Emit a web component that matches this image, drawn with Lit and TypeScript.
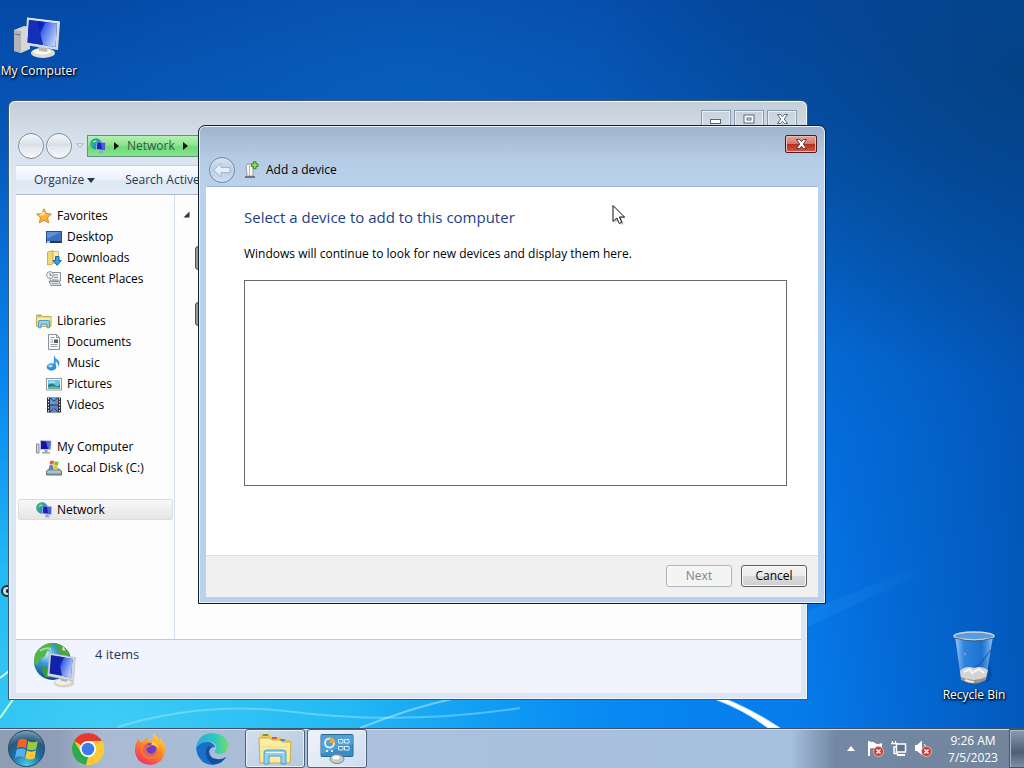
import { LitElement, html, css, svg } from "lit";
import { customElement } from "lit/decorators.js";

const monitor = (id: string) => svg`
  <defs>
    <linearGradient id=${id} x1="0" y1="0" x2="1" y2="0.6">
      <stop offset="0" stop-color="#0a1f9c"/><stop offset=".3" stop-color="#1026c4"/>
      <stop offset=".36" stop-color="#3f66e8"/><stop offset="1" stop-color="#b9cdfb"/>
    </linearGradient>
  </defs>`;

const computerLarge = html`<svg width="48" height="42" viewBox="0 0 48 42">
  ${monitor("scr1")}
  <path d="M-1 13 L9 9 L15 10 L15 32 L6 36 L-1 34Z" fill="#d9d6d2"/>
  <path d="M-1 13 L6 14 L6 36 L-1 34Z" fill="#b3b3b8"/>
  <path d="M0 17 L5 18" stroke="#6d7078"/>
  <ellipse cx="28" cy="36" rx="12" ry="5" fill="#dedbd2"/>
  <ellipse cx="27" cy="34.500" rx="9" ry="3" fill="#faf9f4"/>
  <path d="M23 28 L33 30 L32 35 L24 34Z" fill="#b9b7b0"/>
  <path d="M12 1 L45 5 L43 33 L10 28Z" fill="#d3dae2"/>
  <path d="M12 1 L45 5" stroke="#f3f6fa"/>
  <path d="M14 3 L42 6.500 L40.500 30 L12.500 25.500Z" fill="#0b1ba8"/>
  <path d="M22 4 L42 6.500 L40.500 30 L28 27.900Z" fill="url(#scr1)"/>
  <path d="M14 3 L22 4 L28 27.900 L12.500 25.500Z" fill="#1530b8"/>
</svg>`;

const globePc = html`<svg width="16" height="16" viewBox="0 0 16 16">
  <circle cx="6" cy="6" r="5.800" fill="#2695cf"/>
  <path d="M1 5 Q3 0 8 .5 L7 4 L4 6 L3 10 L1 8Z" fill="#37b36b"/>
  <path d="M3 4 L6 3" stroke="#c7f0f5"/>
  <path d="M6.500 3.500 L16 4.500 L15.500 13 L6 11.800Z" fill="#9fb0dc"/>
  <path d="M7.300 4.300 L15 5.200 L14.700 12 L7 11Z" fill="#1c22b8"/>
  <path d="M11 4.800 L15 5.200 L14.700 12 L12 11.600Z" fill="#4a63dd"/>
  <path d="M9.500 12.500 L13 13 L13.500 15.600 L9 15.200Z" fill="#8fa6d6"/>
</svg>`;

const star = html`<svg width="16" height="16" viewBox="0 0 16 16"><path d="M8 .8 L10.2 5.5 L15.4 6.1 L11.5 9.7 L12.6 14.8 L8 12.2 L3.4 14.8 L4.5 9.7 L.6 6.1 L5.8 5.5Z" fill="#f9b43a" stroke="#d98420"/><path d="M8 3 L9.3 6.5 L6 7.8 L3 7Z" fill="#fde29a"/></svg>`;
const desk = html`<svg width="16" height="16" viewBox="0 0 16 16"><rect x=".5" y="2.5" width="15" height="11" fill="#3c6fc4" stroke="#2a4c94"/><path d="M1 3 H15 L1 10Z" fill="#5b90dc"/><rect x="1" y="12" width="14" height="2" fill="#25395f"/><rect x="1" y="12" width="3" height="2" fill="#8fd0ea"/></svg>`;
const download = html`<svg width="16" height="16" viewBox="0 0 16 16"><path d="M1.5 2 L7 .6 V14 L1.5 15Z" fill="#efd77c" stroke="#cfae52"/><path d="M7 1.500 H12.500 V13 H7Z" fill="#fbeeb4" stroke="#d5bb6a"/><path d="M9.500 6.500 H13 V10.500 H15.400 L11.200 15.400 L7 10.500 H9.500Z" fill="#38a0dd" stroke="#1668a8"/></svg>`;
const recent = html`<svg width="16" height="16" viewBox="0 0 16 16"><path d="M5 1.5 H14.5 V10 H4Z" fill="#eef0f2" stroke="#8d9298"/><path d="M8 4 H12 M8 6.5 H12 M6 9 H12" stroke="#8d9298"/><path d="M3 10.5 H13 L15 14.5 H5Z" fill="#dfe2e5" stroke="#8d9298"/><path d="M6 12.5 H12" stroke="#9fa5aa"/><circle cx="4" cy="4" r="3.4" fill="#f7f8f9" stroke="#8d9298"/><path d="M4 2 V4.3 H6" stroke="#777" fill="none"/></svg>`;
const library = html`<svg width="16" height="16" viewBox="0 0 16 16"><path d="M.5 2 H5 L6.5 3.5 H15 V13.5 H.5Z" fill="#f0dc85" stroke="#c9aa4c"/><path d="M2 3 H5" stroke="#4fb06a"/><path d="M1 6 H15" stroke="#fff6c8"/><path d="M2.5 14.8 V9 Q2.5 7.5 4 7.5 H12 Q13.5 7.5 13.5 9 V14.8 H11 V11 H5 V14.8Z" fill="#8fd3ef" stroke="#4a9cc8"/></svg>`;
const docIcon = html`<svg width="16" height="16" viewBox="0 0 16 16"><path d="M2.5 .5 H10.5 L13.5 3.5 V15.5 H2.5Z" fill="#fafbfc" stroke="#8a9096"/><path d="M10.5 .5 V3.5 H13.5" fill="none" stroke="#8a9096"/><path d="M4.5 3.5 H8.5 M4.5 6 H7 M4.5 8 H7 M4.5 10.500 H11.500 M4.500 12.500 H11.500" stroke="#9aa3ab"/><rect x="8" y="5.500" width="4" height="3.500" fill="#56616c"/></svg>`;
const music = html`<svg width="16" height="16" viewBox="0 0 16 16"><path d="M8 0 Q9 3.500 12 5 Q15 7.500 12 12 Q12.500 8.500 9.800 6.500 V12 H7.500Z" fill="#3a9be0"/><ellipse cx="5.500" cy="12" rx="4.800" ry="3.700" fill="#2f8fdc"/><ellipse cx="4.500" cy="11" rx="2.300" ry="1.400" fill="#a4dafa"/></svg>`;
const picture = html`<svg width="16" height="16" viewBox="0 0 16 16"><rect x=".5" y="2.500" width="15" height="11.500" fill="#fff" stroke="#8b99a5"/><rect x="2" y="4" width="12" height="8.500" fill="#6cc4ea"/><path d="M2 9 Q6 6 9 9 T14 8 V12.500 H2Z" fill="#1c7c96"/><path d="M2 11 Q7 9.500 14 11.500 V12.500 H2Z" fill="#6ab884"/><path d="M3 6 H9" stroke="#e2f6fd"/></svg>`;
const video = html`<svg width="16" height="16" viewBox="0 0 16 16"><rect x="1" y=".5" width="14" height="15" fill="#2b3036"/><rect x="4" y="1" width="8" height="6.500" fill="#5c9fdc"/><rect x="4" y="8.500" width="8" height="6.500" fill="#4b8cd0"/><path d="M4 1 L8 4 L12 1 M4 15 L8 11 L12 15" stroke="#1b3f80" fill="none"/><circle cx="10" cy="5" r="1.300" fill="#d65a5a"/><circle cx="7" cy="11" r="1.300" fill="#d65a5a"/><path d="M2.500 1 V15 M13.500 1 V15" stroke="#e8ecf0" stroke-dasharray="1.500 1.500"/></svg>`;
const pcSmall = html`<svg width="16" height="16" viewBox="0 0 16 16"><path d="M.5 5 H3 V14 H.5Z" fill="#d3d6da" stroke="#868b93"/><path d="M4 1 L15.500 1.500 L15 11 H4Z" fill="#b8c0d6"/><path d="M5 2 L14.500 2.500 L14 10 H5Z" fill="#1515a4"/><path d="M10 2.300 L14.500 2.500 L14 10 H12Z" fill="#5868dc"/><path d="M8.500 11 H11.500 V13 H14 V14.500 H6 V13 H8.500Z" fill="#9aa2ae"/></svg>`;
const disk = html`<svg width="16" height="16" viewBox="0 0 16 16"><path d="M3 9 L13 9 L15.500 11 V15 H.5 V11Z" fill="#8fa2ae" stroke="#5f717d"/><path d="M1 12 H15" stroke="#d3dde3"/><rect x="11" y="13" width="3" height="1" fill="#58d04c"/><path d="M4 1 Q6 -.2 8 1 L7.500 4.800 Q5.500 3.800 3.500 4.800Z" fill="#e3653a"/><path d="M8.600 1.200 Q10.500 2.200 12.500 1.200 L12 5 Q10 6 8.100 5Z" fill="#7db83c"/><path d="M3.300 5.400 Q5.500 4.400 7.400 5.400 L7 9.300 Q5 8.500 2.800 9.500Z" fill="#3f8bd8"/><path d="M8 5.600 Q10 6.600 11.900 5.600 L11.400 9.500 Q9.500 10.500 7.500 9.500Z" fill="#f2bd2e"/></svg>`;

const globeLarge = html`<svg width="44" height="46" viewBox="0 0 44 46">
  <defs><radialGradient id="gl" cx=".35" cy=".3" r=".75"><stop offset="0" stop-color="#bfe9fb"/><stop offset=".35" stop-color="#3a9bd8"/><stop offset="1" stop-color="#0b3a86"/></radialGradient></defs>
  ${monitor("scr2")}
  <circle cx="19.500" cy="19.500" r="18.500" fill="url(#gl)"/>
  <path d="M2 12 Q8 2 18 1 L20 6 L14 9 L12 14 L7 17 L4 24 L1 20Z" fill="#55b544"/>
  <path d="M22 1 Q32 3 37 12 L33 17 L28 12 L24 9Z" fill="#4da344"/>
  <path d="M30 4 L33 9 L29 8Z" fill="#e9dfa8"/>
  <path d="M9 24 L16 26 L17 34 L13 36 Q8 31 9 24Z" fill="#349a3c"/>
  <path d="M7 9 Q13 5 18 7" stroke="#dff6e8" stroke-width="2" fill="none" opacity=".6"/>
  <ellipse cx="31" cy="41" rx="10.500" ry="4.500" fill="#d6d3ca"/><ellipse cx="30" cy="40" rx="8" ry="3" fill="#f0eee8"/><path d="M27 34 L35 35 L34 40 L28 39Z" fill="#b7b5ae"/>
  <path d="M16.500 11 L42.500 15.500 L40.500 39 L14.500 34Z" fill="#d0d6e2" stroke="#a9b0bd" stroke-width=".5"/>
  <path d="M18 13 L39.500 17 L38 35.500 L16.500 31.500Z" fill="#1022a8"/>
  <path d="M25 14.300 L39.500 17 L38 35.500 L29 33.800Z" fill="url(#scr2)"/>
</svg>`;

const bin = html`<svg width="44" height="54" viewBox="0 0 44 54">
  <defs><linearGradient id="bn" x1="0" x2="1"><stop offset="0" stop-color="#b4dafa" stop-opacity=".9"/><stop offset=".25" stop-color="#4a9bea" stop-opacity=".6"/><stop offset=".7" stop-color="#3388e0" stop-opacity=".5"/><stop offset="1" stop-color="#a8d2f8" stop-opacity=".9"/></linearGradient></defs>
  <path d="M37 30 L40 44 Q39 51 34 51Z" fill="#06306e" opacity=".35"/>
  <path d="M3 5 L9 48 Q22 56 34 48 L41 5Z" fill="url(#bn)"/>
  <path d="M8 40 Q13 34 22 37 Q30 34 36 39 L34 47 Q22 53 9 47Z" fill="#d3d4d4"/>
  <path d="M12 41 L18 38 L20 42 L27 38 L32 42" stroke="#f4f4f1" stroke-width="2" fill="none"/>
  <path d="M9 46 Q22 52 34 46 V49 Q22 56 9 49Z" fill="#9c938b"/><path d="M13 49 Q18 51 22 51" stroke="#ece8e2" stroke-width="2" fill="none"/>
  <path d="M39 19 Q32 28 27 34 L23 36" stroke="#174f9c" fill="none"/><path d="M12 22 L14 24" stroke="#8f8fe0" stroke-width="2"/>
  <ellipse cx="22" cy="5" rx="20" ry="4" fill="#5b9cdc" stroke="#cdd6de" stroke-width="1.500"/>
  <path d="M3 7 Q22 13 41 7" stroke="#3d5c82" fill="none"/>
</svg>`;

const flag = (s: number) => html`<svg class="flag" width=${s} height=${s} viewBox="0 0 24 24"><path d="M4 4 Q8 1 12 4 L11 11.500 Q7 9 2.500 11.500Z" fill="#f0642a"/><path d="M13 4.500 Q17.500 7 22 4.500 L20.500 12 Q16 14.500 12 12Z" fill="#9acb3e"/><path d="M2.300 12.700 Q6.800 10.200 10.800 12.700 L9.500 20 Q5.500 17.500 1 20Z" fill="#52b4ee"/><path d="M11.800 13.200 Q16 15.700 20.300 13.200 L19 20.500 Q15 23 10.500 20.500Z" fill="#fbc93a"/></svg>`;

const chrome = html`<svg width="32" height="32" viewBox="0 0 32 32"><circle cx="16" cy="16" r="16" fill="#fcc934"/><path d="M16 16 L2.140 8 A16 16 0 0 1 29.860 8Z" fill="#e33b2e"/><path d="M2.140 8 L9.100 20 L16 24 L14 31.900 A16 16 0 0 1 2.140 8Z" fill="#2da94f"/><path d="M16 8 H29.860 A16 16 0 0 1 14 31.900 L22.900 20Z" fill="#fcc934"/><circle cx="16" cy="16" r="8" fill="#fff"/><circle cx="16" cy="16" r="6.300" fill="#3a7ce8"/></svg>`;
const firefox = html`<svg width="32" height="32" viewBox="0 0 32 32">
  <defs><linearGradient id="ff" x1=".8" y1="0" x2=".2" y2="1"><stop offset="0" stop-color="#ffe03a"/><stop offset=".45" stop-color="#ff8a25"/><stop offset="1" stop-color="#f0286a"/></linearGradient></defs>
  <path d="M19 0 Q25 4 25 9 Q27 8 26.500 5 Q32 11 31 19 Q29 31 16 32 Q3 31 1 19 Q.5 10 5 6 L6 9 Q8 8 10 9 Q11 5 13 4 Q13 7 16 9 Q20 6 19 0Z" fill="url(#ff)"/>
  <circle cx="16" cy="17" r="7" fill="#7a3be0"/><path d="M7 13 Q11 10 15 12 L18 13 Q15 16 12 16 Q13 20 17 20 Q22 19 23 15 Q26 23 20 26 Q10 28 7 19Z" fill="#ff7a2a" opacity=".7"/><path d="M13 15 Q17 12 21 15 Q22 20 17 21 Q13 20 13 15Z" fill="#6d3cc8"/><path d="M19 8 Q24 10 24 16 Q22 12 17 12Z" fill="#ffcf35"/></svg>`;
const edge = html`<svg width="32" height="32" viewBox="0 0 32 32">
  <defs><linearGradient id="e1" x1="0" x2="1"><stop offset="0" stop-color="#2aa9e4"/><stop offset=".6" stop-color="#2fc9c0"/><stop offset="1" stop-color="#6fdd62"/></linearGradient></defs>
  <path d="M0 15 Q2 1 16 0 Q31 1 32 13 Q32 20 24 21 Q18 21 19 18 Q22 14 18 10 Q10 6 0 15Z" fill="url(#e1)"/>
  <path d="M0 15 Q5 8 13 9 Q18 10 19 14 Q14 14 13 19 Q13 26 21 27 Q26 27 30 24 Q25 32 16 32 Q2 31 0 15Z" fill="#1a70c8"/>
  <path d="M10 17 Q9 27 17 31.500 Q25 31 30 24 Q26 27 21 26 Q13 25 13 18 Q13 15 16 13 Q11 13 10 17Z" fill="#124f9c"/></svg>`;
const explorer = html`<svg width="34" height="32" viewBox="0 0 34 32">
  <path d="M2 3 Q2 1 4 1 H12 L14 4 H22 L24 6 H31 Q33 6 33 8 V29 H2Z" fill="#e9c95c"/>
  <rect x="5" y="1" width="5" height="2" fill="#4aa45c"/><rect x="14" y="4" width="5" height="2" fill="#d0603c"/><rect x="22" y="6" width="5" height="2" fill="#4a90cc"/>
  <path d="M1 5 H12 L14 7 H22 L24 9 H33 L32 30 H2Z" fill="#faeda0" stroke="#c9a94a"/>
  <path d="M3 14 H31 M3 18 H31" stroke="#f2dc7c"/>
  <path d="M6 31 V20 Q6 17 9 17 H25 Q28 17 28 20 V31 H23 V23 H11 V31Z" fill="#8fd0f0" stroke="#4c9cc8"/><path d="M8 19.500 H26" stroke="#e8f8ff"/></svg>`;
const devices = html`<svg width="34" height="30" viewBox="0 0 34 30"><rect x="1" y=".5" width="32" height="22" rx="1" fill="#3a8ec6" stroke="#256a9c"/><path d="M1 1 H33 V10 L1 20Z" fill="#5fabdc" opacity=".6"/><circle cx="9.500" cy="9" r="4.500" fill="none" stroke="#d9ecf8" stroke-width="2"/><path d="M9.500 9 V3.500 A5.500 5.500 0 0 1 15 9Z" fill="#f0a63c"/><g fill="none" stroke="#d9ecf8"><path d="M18.500 5.500 H23 V9 H18.500Z M24.500 5.500 H29 V9 H24.500Z M18.500 12.500 H23 V16 H18.500Z M24.500 12.500 H29 V16 H24.500Z"/></g><path d="M6 17 H8 M11 17 H13" stroke="#d9ecf8" stroke-width="2"/><ellipse cx="17" cy="25" rx="7" ry="4.500" fill="#c3c9ce" stroke="#7d8890"/><ellipse cx="16" cy="23.500" rx="3.500" ry="2" fill="#fff"/></svg>`;

const redBadge = svg`<circle cx="11.500" cy="11.500" r="5" fill="#cf3a34" stroke="#efb5b0"/><path d="M9.500 9.500 L13.500 13.500 M13.500 9.500 L9.500 13.500" stroke="#fff" stroke-width="1.500"/>`;
const trayFlag = html`<svg width="18" height="18" viewBox="0 0 18 18"><path d="M2 1 V16" stroke="#fff" stroke-width="2"/><path d="M3 2 Q6 1 8 3 T15 3 V10 Q11 11 8 9 T3 9Z" fill="#fff"/>${redBadge}</svg>`;
const trayNet = html`<svg width="18" height="18" viewBox="0 0 18 18"><path d="M1.500 1 V4 M4.500 1 V4" stroke="#fff"/><path d="M0 3.500 H6 V7 H3 V13.500 H7" fill="none" stroke="#fff" stroke-width="1.500"/><rect x="5.500" y="4" width="9" height="8" fill="#5f748c" stroke="#fff" stroke-width="1.500"/><path d="M6 15 H14" stroke="#fff" stroke-width="2"/></svg>`;
const traySound = html`<svg width="18" height="18" viewBox="0 0 18 18"><path d="M0 5 H2 L7 .5 V15 L2 11 H0Z" fill="#fff"/><path d="M9 4 Q11 6 11 8" stroke="#fff" fill="none"/>${redBadge}</svg>`;

const addIcon = html`<svg width="16" height="18" viewBox="0 0 16 18"><path d="M2 4.500 L4 3 H9 V15 H3Z" fill="#f4f4f0" stroke="#9b9b98"/><path d="M5.500 4 V15" stroke="#c2bd93"/><path d="M1 16 H11" stroke="#74747a" stroke-width="2"/><path d="M9.500 .7 H12 V3 H14 V5.500 H12 V7.800 H9.500 V5.500 H7.500 V3 H9.500Z" fill="#8fe06a" stroke="#2c8a24"/></svg>`;
const arrowGlyph = html`<svg width="18" height="16" viewBox="0 0 18 16"><path d="M1 8 L8 1 V5.500 H17 V10.500 H8 V15Z" fill="#e3eefa" stroke="#a4b9d0"/></svg>`;

type Item = { label: string; icon: unknown; child?: boolean; selected?: boolean };
const groups: Item[][] = [
  [
    { label: "Favorites", icon: star },
    { label: "Desktop", icon: desk, child: true },
    { label: "Downloads", icon: download, child: true },
    { label: "Recent Places", icon: recent, child: true },
  ],
  [
    { label: "Libraries", icon: library },
    { label: "Documents", icon: docIcon, child: true },
    { label: "Music", icon: music, child: true },
    { label: "Pictures", icon: picture, child: true },
    { label: "Videos", icon: video, child: true },
  ],
  [
    { label: "My Computer", icon: pcSmall },
    { label: "Local Disk (C:)", icon: disk, child: true },
  ],
  [{ label: "Network", icon: globePc, selected: true }],
];

@customElement("app-root")
export class AppRoot extends LitElement {
  static styles = css`
    :host {
      display: flex;
      flex-direction: column;
      height: 100vh;
      overflow: hidden;
      font: 12px/16px "Open Sans", "Noto Sans", sans-serif;
      color: #000;
    }
    * { box-sizing: border-box; }
    button { font: inherit; color: inherit; padding: 0; border: 0; background: none; }
    a { color: inherit; text-decoration: none; }
    svg { display: block; flex: none; overflow: visible; }
    .desktop { position: relative; flex: 1; min-height: 0; background: #0860c8; overflow: hidden; }
    .wallpaper { position: absolute; inset: 0; width: 100%; height: 100%; overflow: hidden; }
    .shortcut {
      position: absolute; width: 78px; display: flex; flex-direction: column; align-items: center;
      gap: 4px; color: #fff; text-shadow: 1px 1px 2px #000, 0 1px 3px #000; white-space: nowrap;
    }
    .computer { left: 0; top: 17px; }
    .recycle { right: 11px; bottom: 25px; gap: 2px; }
    .hidden-shortcut { position: absolute; left: 1px; top: 585px; }

    .explorer {
      position: absolute; inset: 100px 216px 28px 8px; display: flex; flex-direction: column;
      border: 1px solid #3d5873; border-radius: 7px 7px 0 0; padding: 0 6px 6px 7px;
      background: linear-gradient(#c3ced9, #d8e2ec 40px, #dfe8f2 90px, #dbe6f2);
      box-shadow: inset 0 0 0 1px #f0f6fb;
    }
    .caption { display: flex; justify-content: flex-end; gap: 3px; height: 28px; padding: 9px 4px 0 0; }
    .caption button {
      width: 30px; height: 16px; border: 1px solid #8b9bad; border-bottom: 0;
      display: grid; place-items: center; box-shadow: inset 0 0 0 1px #e8eff6;
    }
    .address { display: flex; align-items: center; height: 36px; padding: 0 0 2px 2px; gap: 2px; }
    .round {
      width: 26px; height: 26px; border: 1px solid #7f8b98; border-radius: 50%; flex: none;
      display: grid; place-items: center;
      background: linear-gradient(#f4f7fa, #d5dde5 50%, #dfe6ed 52%, #f6f9fc);
      box-shadow: inset 0 0 0 1px #f6f9fc;
    }
    .history { margin-left: 2px; }
    .crumbs {
      display: flex; align-items: center; flex: 1; height: 22px; margin-left: 1px; padding-left: 2px; gap: 8px;
      border: 1px solid #6c8c88; background: linear-gradient(#b4f0b4, #8ee58e 45%, #6fdb78 55%, #84e58a);
      color: #2d5c46;
    }
    .toolbar {
      display: flex; align-items: center; height: 30px; padding-left: 18px; gap: 30px; color: #1e395b;
      background: linear-gradient(#fafcfe, #eaf1fa 50%, #dde8f5 52%, #e3ecf7);
      border-top: 1px solid #c3cfdc; border-bottom: 1px solid #a9b9ca;
    }
    .organize { display: flex; align-items: center; gap: 3px; }
    .content { display: flex; flex: 1; min-height: 0; background: #fdfdfd; }
    .nav {
      display: flex; flex-direction: column; gap: 21px; width: 159px; padding: 10px 1px 0 2px;
      border-right: 1px solid #d3e0ec;
    }
    .nav ul { margin: 0; padding: 0; list-style: none; }
    .nav a { display: flex; align-items: center; gap: 5px; height: 21px; padding-left: 17px; border: 1px solid transparent; white-space: nowrap; }
    .nav a.child { padding-left: 27px; }
    .nav a.selected { border-color: #dcdcdc; border-radius: 2px; background: linear-gradient(#f8f8f8, #e6e6e6); }
    .items { display: flex; flex-direction: column; gap: 32px; flex: 1; padding: 16px 0 0 8px; }
    .items .device { margin-left: 12px; width: 40px; height: 24px; border: 1px solid #555; border-radius: 3px; background: #999; }
    .items svg { margin-bottom: -4px; }
    .details {
      display: flex; gap: 18px; height: 54px; padding: 2px 0 0 17px; color: #1e395b; font-size: 13px;
      background: #f1f4fe; border-top: 1px solid #c2cbd5;
    }
    .details span { padding-top: 4px; }

    .dialog {
      position: absolute; inset: 125px 198px 124px 198px; display: flex; flex-direction: column;
      border: 1px solid #10202e; border-radius: 7px 7px 0 0; padding: 0 7px 6px;
      background: linear-gradient(#9eb3ca, #b5cce4 32px, #bad1ec 60px, #b9d1ea);
      box-shadow: inset 0 0 0 1px #e6f1fa;
    }
    .dialog-caption { display: flex; justify-content: flex-end; height: 30px; padding: 9px 1px 0 0; }
    .close {
      width: 32px; height: 18px; border: 1px solid #4d1c22; border-radius: 2px; display: grid; place-items: center;
      background: linear-gradient(#e5a498, #d3776c 48%, #b8301f 52%, #cf5a45);
      box-shadow: inset 0 0 0 1px #eebbb2;
    }
    .dialog-head { display: flex; align-items: center; height: 30px; padding-left: 3px; padding-bottom: 2px; gap: 6px; }
    .dialog-head svg { margin-left: 3px; }
    .dialog-head .round { background: linear-gradient(#d7e3f0, #bacde2 50%, #cfdff0); border-color: #6f86a0; box-shadow: inset 0 0 0 1px #d9e6f3; }
    .dialog-head .round svg { margin: 0; }
    .body { display: flex; flex-direction: column; flex: 1; min-height: 0; padding: 18px 31px 69px 38px; background: #fff; border-top: 1px solid #9db4cf; }
    h1 { margin: 0; font-size: 15px; line-height: 24px; font-weight: 400; color: #1c3f8c; }
    p { margin: 16px 0 17px; line-height: 18px; }
    .found { flex: 1; border: 1px solid #646a70; }
    .footer { display: flex; justify-content: flex-end; gap: 9px; height: 42px; padding: 9px 11px 0 0; background: #f0f0f0; border-top: 1px solid #dfdfdf; }
    .footer button {
      width: 66px; height: 22px; border: 1px solid #5f5f5f; border-radius: 3px;
      background: linear-gradient(#f3f3f3, #ebebeb 50%, #dadada 52%, #cfcfcf); box-shadow: inset 0 0 0 1px #fafafa;
    }
    .footer button:disabled { border-color: #adb2b5; background: #f4f4f4; color: #838383; }
    .pointer { position: absolute; left: 612px; top: 204px; }

    .taskbar {
      display: flex; align-items: center; height: 40px; flex: none; padding-left: 8px;
      border-top: 1px solid #40536b; box-shadow: inset 0 1px 0 #d0dcea;
      background: linear-gradient(90deg, #8e9db2, #8f9fb8 60px, #a9bad2 100px, #abc1dd 400px, #a6c0de 790px, #7388a3 835px, #72859d);
    }
    .orb {
      width: 37px; height: 37px; border-radius: 50%; display: grid; place-items: center; flex: none;
      border: 1px solid #23486c; margin-right: 27px;
      background: radial-gradient(circle at 50% 100%, #4bd3ee, #1c6f9e 40%, #27597f 65%, #9db8cc);
    }
    .pins { display: flex; gap: 30px; margin-right: 17px; }
    .tasks { display: flex; gap: 2px; height: 39px; }
    .tasks button {
      width: 60px; border: 1px solid #4c6078; border-radius: 3px; display: grid; place-items: center;
      background: linear-gradient(135deg, #d3dfee, #b5c8e0); box-shadow: inset 0 0 0 1px #e8f0fa;
    }
    .tasks button.active { background: linear-gradient(135deg, #f0f4fa, #cfdcee); }
    .tray { display: flex; align-items: center; margin-left: auto; height: 100%; color: #fff; }
    .tray-icons { display: flex; align-items: center; gap: 6px; }
    .chevron { margin-right: 6px; }
    .clock { width: 72px; margin-left: 4px; text-align: center; line-height: 17px; }
    .show-desktop {
      width: 15px; height: 39px; border: 1px solid #45566c; border-right: 0;
      background: linear-gradient(#8a9cb2, #4c6077 60%, #7d90a8); box-shadow: inset 1px 1px 0 #a9b8ca;
    }
  `;

  private wallpaper() {
    return html`<svg class="wallpaper" viewBox="0 0 1024 728" preserveAspectRatio="none" aria-hidden="true">
      <defs>
        <linearGradient id="base" x1="0" y1="0" x2="0" y2="1">
          <stop offset="0" stop-color="#0549a6"/><stop offset=".3" stop-color="#0560c4"/><stop offset=".6" stop-color="#0470e0"/><stop offset="1" stop-color="#0478ea"/>
        </linearGradient>
        <radialGradient id="glow" cx="0.1" cy="1" r=".8">
          <stop offset="0" stop-color="#3fcdf4"/><stop offset=".3" stop-color="#24bdf5" stop-opacity=".95"/><stop offset=".6" stop-color="#0a94f8" stop-opacity=".7"/><stop offset="1" stop-color="#0a80f0" stop-opacity="0"/>
        </radialGradient>
        <linearGradient id="shade" x1="0" x2="1" y1="0" y2="0">
          <stop offset=".78" stop-color="#0450b0" stop-opacity="0"/><stop offset="1" stop-color="#034ba6" stop-opacity=".7"/>
        </linearGradient>
        <radialGradient id="corner" cx="1" cy=".1" r=".42"><stop offset="0" stop-color="#04407f" stop-opacity=".85"/><stop offset="1" stop-color="#04407f" stop-opacity="0"/></radialGradient>
        <radialGradient id="topglow" cx=".4" cy=".14" r=".35"><stop offset="0" stop-color="#0a62c0" stop-opacity=".7"/><stop offset="1" stop-color="#0a62c0" stop-opacity="0"/></radialGradient>
        <linearGradient id="ray" x1="0" x2="1"><stop offset="0" stop-color="#48b0ff" stop-opacity=".16"/><stop offset="1" stop-color="#48b0ff" stop-opacity="0"/></linearGradient>
      </defs>
      <rect width="1024" height="728" fill="url(#base)"/>
      <rect width="1024" height="728" fill="url(#topglow)"/>
      <rect width="1024" height="728" fill="url(#glow)"/>
      <rect width="1024" height="728" fill="url(#shade)"/>
      <rect width="1024" height="728" fill="url(#corner)"/>
      <path d="M800 614 L930 562 L940 566 L800 630Z" fill="url(#ray)"/>
      <path d="M118 727 Q200 702 285 711 Q400 726 520 708" stroke="#b6efff" stroke-opacity=".4" stroke-width="2" fill="none"/>
      <path d="M360 728 Q410 708 452 699" stroke="#c6f2ff" stroke-opacity=".5" stroke-width="2" fill="none"/>
      <path d="M0 718 L14 698" stroke="#c8ffb0" stroke-width="2"/><path d="M0 678 L9 671" stroke="#d6f8ff" stroke-width="2"/>
      <path d="M718 696 Q750 708 780 728 L768 728 Q745 710 712 698Z" fill="#fff" stroke="#bfe6ff"/>
    </svg>`;
  }

  render() {
    return html`
      <main class="desktop">
        ${this.wallpaper()}
        <a class="shortcut computer" href="#">${computerLarge}<span>My Computer</span></a>
        <a class="shortcut recycle" href="#">${bin}<span>Recycle Bin</span></a>
        <svg class="hidden-shortcut" width="14" height="14" viewBox="0 0 14 14" aria-hidden="true"><circle cx="6" cy="6" r="5" fill="#cfd6da" stroke="#1c2c33" stroke-width="2"/><circle cx="7" cy="6" r="2" fill="#111"/></svg>

        <section class="explorer" aria-label="Network">
          <div class="caption">
            <button aria-label="Minimize"><svg width="12" height="12" viewBox="0 0 12 12"><rect x=".5" y="6.500" width="10" height="4" fill="#fff" stroke="#58677a"/></svg></button>
            <button aria-label="Maximize"><svg width="12" height="12" viewBox="0 0 12 12"><rect x="1" y="2" width="10" height="8" fill="#fff" stroke="#58677a"/><rect x="4" y="5" width="4" height="2" fill="#fff" stroke="#58677a"/></svg></button>
            <button aria-label="Close window"><svg width="13" height="12" viewBox="0 0 13 12"><path d="M1.500 1.500 H4.500 L6.500 3.700 L8.500 1.500 H11.500 L8.300 6 L11.500 10.500 H8.500 L6.500 8.300 L4.500 10.500 H1.500 L4.700 6Z" fill="#fff" stroke="#58677a"/></svg></button>
          </div>
          <div class="address">
            <button class="round" aria-label="Back"></button>
            <button class="round" aria-label="Forward"></button>
            <svg class="history" width="8" height="6" viewBox="0 0 8 6"><path d="M.8 .8 H7.200 L4 4.800Z" fill="#f4f7fa" stroke="#a3afbc"/></svg>
            <div class="crumbs">${globePc}
              <svg width="5" height="8" viewBox="0 0 5 8"><path d="M0 0 L5 4 L0 8Z" fill="#111"/></svg>
              <a href="#">Network</a>
              <svg width="5" height="8" viewBox="0 0 5 8"><path d="M0 0 L5 4 L0 8Z" fill="#111"/></svg>
            </div>
          </div>
          <div class="toolbar">
            <button class="organize">Organize<svg width="8" height="5" viewBox="0 0 8 5"><path d="M0 0 H8 L4 5Z" fill="#1e395b"/></svg></button>
            <button>Search Active</button>
          </div>
          <div class="content">
            <nav class="nav" aria-label="Folders">
              ${groups.map((g) => html`<ul>${g.map((i) => html`<li><a href="#" class="${i.child ? "child" : ""} ${i.selected ? "selected" : ""}">${i.icon}<span>${i.label}</span></a></li>`)}</ul>`)}
            </nav>
            <div class="items">
              <svg width="7" height="7" viewBox="0 0 7 7"><path d="M6.500 .5 V6.500 H.5Z" fill="#333"/></svg>
              <div class="device"></div>
              <div class="device"></div>
            </div>
          </div>
          <div class="details">${globeLarge}<span>4 items</span></div>
        </section>

        <section class="dialog" role="dialog" aria-labelledby="dialog-title">
          <div class="dialog-caption">
            <button class="close" aria-label="Close"><svg width="13" height="12" viewBox="0 0 13 12"><path d="M1.500 1.500 H4.500 L6.500 3.700 L8.500 1.500 H11.500 L8.300 6 L11.500 10.500 H8.500 L6.500 8.300 L4.500 10.500 H1.500 L4.700 6Z" fill="#fff" stroke="#5c3a44"/></svg></button>
          </div>
          <div class="dialog-head">
            <button class="round" aria-label="Back">${arrowGlyph}</button>
            ${addIcon}<span id="dialog-title">Add a device</span>
          </div>
          <div class="body">
            <h1>Select a device to add to this computer</h1>
            <p>Windows will continue to look for new devices and display them here.</p>
            <div class="found" role="listbox" aria-label="Devices"></div>
          </div>
          <div class="footer">
            <button disabled>Next</button>
            <button>Cancel</button>
          </div>
        </section>
        <svg class="pointer" width="16" height="22" viewBox="0 0 16 22" aria-hidden="true"><path d="M3 3 V19 L7 15.500 L9.500 21 L12 20 L9.500 14.500 H14Z" fill="#000" opacity=".2"/><path d="M1 1.500 V17.500 L4.800 14 L7.300 19.500 L9.800 18.400 L7.400 13 H12.500Z" fill="#fff" stroke="#111"/></svg>
      </main>

      <footer class="taskbar">
        <button class="orb" aria-label="Start">${flag(26)}</button>
        <div class="pins">
          <button aria-label="Chrome">${chrome}</button>
          <button aria-label="Firefox">${firefox}</button>
          <button aria-label="Edge">${edge}</button>
        </div>
        <div class="tasks">
          <button aria-label="Explorer">${explorer}</button>
          <button class="active" aria-label="Add a device">${devices}</button>
        </div>
        <div class="tray">
          <div class="tray-icons">
            <svg class="chevron" width="8" height="5" viewBox="0 0 8 5"><path d="M0 5 L4 0 L8 5Z" fill="#fff"/></svg>
            ${trayFlag}${trayNet}${traySound}
          </div>
          <time class="clock">9:26 AM<br />7/5/2023</time>
          <button class="show-desktop" aria-label="Show desktop"></button>
        </div>
      </footer>
    `;
  }
}
